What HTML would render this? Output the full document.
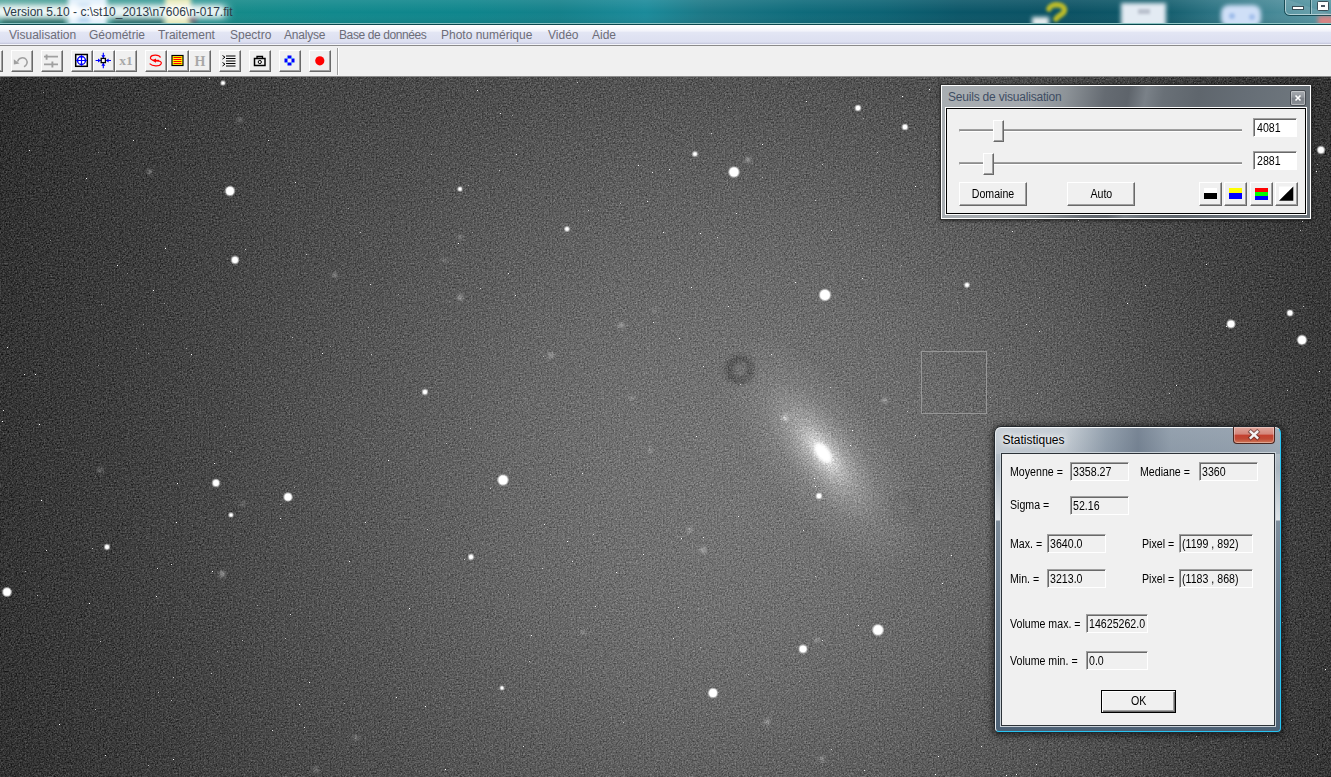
<!DOCTYPE html>
<html lang="fr">
<head>
<meta charset="utf-8">
<title>Iris - Version 5.10</title>
<style>
html,body{margin:0;padding:0;}
body{width:1331px;height:777px;overflow:hidden;position:relative;background:#505050;font-family:"Liberation Sans","DejaVu Sans",sans-serif;}
.abs{position:absolute;}
#sky{position:absolute;left:0;top:76px;width:1331px;height:701px;}
#titlebar{position:absolute;left:0;top:0;width:1331px;height:25px;overflow:hidden;background:#0e858c;}
#titletext{position:absolute;left:3px;top:5px;font-size:12px;color:#2c3a48;white-space:nowrap;letter-spacing:0px;}
#menubar{position:absolute;left:0;top:25px;width:1331px;height:20px;background:linear-gradient(180deg,#ffffff 0px,#fbfbfe 3px,#f1f2fa 6px,#e3e6f4 7.5px,#dfe2f2 12px,#dde0f1 17px,#c9cce0 18.5px,#f4f5fb 19.5px);}
#menubar span{position:absolute;top:3px;font-size:12px;color:#6d6d78;white-space:nowrap;}
#toolbar{position:absolute;left:0;top:45px;width:1331px;height:32px;background:#f0f0f0;border-top:1px solid #8a8a8a;border-bottom:1px solid #8c8c8c;box-sizing:border-box;}
.tb{position:absolute;top:4px;width:22px;height:22px;box-sizing:border-box;background:#f0f0f0;
 border-top:1px solid #fff;border-left:1px solid #fff;border-right:1px solid #696969;border-bottom:1px solid #696969;
 box-shadow:inset -1px -1px 0 #a0a0a0;}
.tb svg{position:absolute;left:0;top:0;width:20px;height:20px;}

#seuils{position:absolute;left:940px;top:84px;width:372px;height:136px;box-sizing:border-box;border:1px solid #2e2e2e;box-shadow:0 1px 3px rgba(0,0,0,.55);}
#seuils .sglass{position:absolute;left:0;top:0;right:0;bottom:0;border:1px solid #fff;
 background:linear-gradient(100deg,#a9aeb2 0%,#a4a9ae 22%,#8d9398 32%,#656b72 42%,#5e646b 48%,#7a8188 52.5%,#697077 57%,#5f666d 66%,#666e76 78%,#6d757c 90%,#666d74 100%);}
#seuils .stitle{position:absolute;left:7px;top:5px;letter-spacing:-0.2px;font-size:12px;color:#3f4d63;white-space:nowrap;}
#seuils .sclose{position:absolute;left:349px;top:5px;width:16px;height:16px;box-sizing:border-box;border:1px solid #454a50;border-radius:2px;
 background:linear-gradient(180deg,#a7abb0 0%,#8e9399 45%,#7b8087 50%,#8b9096 100%);box-shadow:inset 0 0 0 1px rgba(255,255,255,.35);}
#seuils .sclose svg{position:absolute;left:0;top:0;}
#seuils .sclient{position:absolute;left:5px;top:23px;width:358px;height:104px;background:#f0f0f0;border:1px solid #000;outline:1px solid #fff;
 font-size:11px;color:#000;}
.trk{position:absolute;left:12px;width:283px;height:3px;box-sizing:border-box;border-top:1px solid #a0a0a0;border-left:1px solid #a0a0a0;background:#8c8c8c;border-bottom:1px solid #fff;}
.thumb{position:absolute;width:11px;height:22px;box-sizing:border-box;background:#f0f0f0;border-top:1px solid #fff;border-left:1px solid #fff;border-right:1px solid #696969;border-bottom:1px solid #696969;box-shadow:inset -1px -1px 0 #a0a0a0;}
.edit{position:absolute;width:44px;height:19px;box-sizing:border-box;background:#fff;border-top:1px solid #a0a0a0;border-left:1px solid #a0a0a0;border-right:1px solid #fff;border-bottom:1px solid #fff;box-shadow:inset 1px 1px 0 #696969;font-size:12px;line-height:14px;}
.edit i{position:absolute;left:3px;top:2px;}
.btn{position:absolute;height:24px;box-sizing:border-box;background:#f0f0f0;border-top:1px solid #fff;border-left:1px solid #fff;border-right:1px solid #696969;border-bottom:1px solid #696969;box-shadow:inset -1px -1px 0 #a0a0a0;text-align:center;font-size:12px;line-height:23px;color:#000;}

.btn svg{position:absolute;left:0;top:0;}

#stats{position:absolute;left:994px;top:426px;width:288px;height:307px;box-sizing:border-box;border:1px solid #23282d;border-radius:7px 7px 5px 5px;
 box-shadow:0 1px 6px 2px rgba(0,0,0,.55);}
#stats .wglass{position:absolute;left:0;top:0;right:0;bottom:0;box-sizing:border-box;border-radius:6px 6px 4px 4px;
 border-top:1px solid #f4f7f9;border-left:1px solid #e8ecef;border-right:1px solid #28c4f2;border-bottom:1px solid #28c4f2;
 background:linear-gradient(90deg,rgba(255,255,255,.12) 0px,rgba(255,255,255,.1) 70px,rgba(70,90,112,.36) 110px,rgba(55,72,94,.52) 142px,rgba(70,90,112,.36) 175px,rgba(70,90,112,.33) 240px,rgba(70,90,112,.22) 286px) 0 0/100% 26px no-repeat,
 linear-gradient(180deg,#c1c9d1 0px,#b5bec7 24px,#a9b4be 40px,#dfe3e7 92px,#7f8d9b 93px,#66788a 180px,#4c6074 305px);}
#stats .wtitle{position:absolute;left:7.5px;top:6px;font-size:12px;color:#000;white-space:nowrap;text-shadow:0 0 5px #fff,0 0 8px #fff,0 0 10px rgba(255,255,255,.8);}
#stats .wclose{position:absolute;left:238px;top:0px;width:42px;height:17px;box-sizing:border-box;border:1px solid #4a2620;border-top:none;border-radius:0 0 4px 4px;
 background:linear-gradient(180deg,#e0a79d 0%,#d4857a 45%,#c4402f 50%,#c04a35 75%,#d17a5a 100%);box-shadow:inset 0 0 0 1px rgba(255,255,255,.35);}
#stats .wclose svg{position:absolute;left:-1px;top:-1px;}
#stats .wclient{position:absolute;left:6px;top:26px;width:272px;height:271px;background:#f0f0f0;border:1px solid #2c3238;outline:1px solid #c9d1d8;font-size:11px;color:#000;}
.lb{position:absolute;white-space:nowrap;font-size:12px;line-height:14px;transform:scaleX(.885);transform-origin:0 0;}
.ro{position:absolute;height:19px;box-sizing:border-box;background:#f0f0f0;border-top:1px solid #a0a0a0;border-left:1px solid #a0a0a0;border-right:1px solid #fff;border-bottom:1px solid #fff;box-shadow:inset 1px 1px 0 #696969;font-size:12px;line-height:14px;white-space:nowrap;overflow:hidden;}
.ro i,.edit i,.btn i,.okb i{font-style:normal;display:inline-block;transform:scaleX(.885);transform-origin:0 0;}
.ro i{position:absolute;left:2px;top:2px;}
.btn i,.okb i{transform-origin:50% 0;}
.okb{position:absolute;width:75px;height:23px;box-sizing:border-box;border:1px solid #000;background:#f0f0f0;text-align:center;font-size:12px;line-height:20px;box-shadow:inset 1px 1px 0 #fff,inset -1px -1px 0 #696969,inset -2px -2px 0 #a0a0a0;}
</style>
</head>
<body>
<svg id="sky" width="1331" height="701" viewBox="0 76 1331 701">
<defs>
<radialGradient id="vg" gradientUnits="userSpaceOnUse" cx="760" cy="480" r="900"><stop offset="0.0000" stop-color="#747474"/><stop offset="0.0556" stop-color="#737373"/><stop offset="0.1111" stop-color="#717171"/><stop offset="0.1667" stop-color="#6e6e6e"/><stop offset="0.2222" stop-color="#6a6a6a"/><stop offset="0.2778" stop-color="#656565"/><stop offset="0.3333" stop-color="#5f5f5f"/><stop offset="0.3889" stop-color="#595959"/><stop offset="0.4444" stop-color="#535353"/><stop offset="0.5000" stop-color="#4d4d4d"/><stop offset="0.5556" stop-color="#484848"/><stop offset="0.6111" stop-color="#434343"/><stop offset="0.6667" stop-color="#3f3f3f"/><stop offset="0.7222" stop-color="#3b3b3b"/><stop offset="0.7778" stop-color="#383838"/><stop offset="0.8333" stop-color="#353535"/><stop offset="0.8889" stop-color="#323232"/><stop offset="0.9444" stop-color="#2d2d2d"/><stop offset="1.0000" stop-color="#2c2c2c"/></radialGradient>
<linearGradient id="lx" gradientUnits="userSpaceOnUse" x1="0" x2="1331" y1="0" y2="0"><stop offset="0" stop-color="#fff" stop-opacity="0"/><stop offset="0.22" stop-color="#fff" stop-opacity="0.03"/><stop offset="0.5" stop-color="#fff" stop-opacity="0.01"/><stop offset="0.8" stop-color="#000" stop-opacity="0"/><stop offset="1" stop-color="#000" stop-opacity="0.11"/></linearGradient>
<radialGradient id="gh"><stop offset="0" stop-color="#fff" stop-opacity="0.6"/><stop offset="0.35" stop-color="#fff" stop-opacity="0.27"/><stop offset="0.7" stop-color="#fff" stop-opacity="0.09"/><stop offset="1" stop-color="#fff" stop-opacity="0"/></radialGradient>
<radialGradient id="gh2"><stop offset="0" stop-color="#fff" stop-opacity="0.2"/><stop offset="0.5" stop-color="#fff" stop-opacity="0.1"/><stop offset="1" stop-color="#fff" stop-opacity="0"/></radialGradient>
<radialGradient id="gc"><stop offset="0" stop-color="#fff" stop-opacity="1"/><stop offset="0.68" stop-color="#fff" stop-opacity="1"/><stop offset="1" stop-color="#fff" stop-opacity="0"/></radialGradient>
<filter id="grain" x="0" y="0" width="100%" height="100%" color-interpolation-filters="sRGB">
<feTurbulence type="fractalNoise" baseFrequency="0.63" numOctaves="3" seed="11" result="t"/>
<feColorMatrix in="t" type="matrix" values="0.6 0.6 -0.2 0 0  0.6 0.6 -0.2 0 0  0.6 0.6 -0.2 0 0  0 0 0 0 1" result="g"/>
<feComposite in="SourceGraphic" in2="g" operator="arithmetic" k1="0" k2="1" k3="0.44" k4="-0.22"/>
</filter>
<filter id="b1" x="-50%" y="-50%" width="200%" height="200%"><feGaussianBlur stdDeviation="0.8"/></filter>
<filter id="b2" x="-50%" y="-50%" width="200%" height="200%"><feGaussianBlur stdDeviation="1.4"/></filter>
<filter id="b4" x="-50%" y="-50%" width="200%" height="200%"><feGaussianBlur stdDeviation="2"/></filter>
<filter id="b3" x="-50%" y="-50%" width="200%" height="200%"><feGaussianBlur stdDeviation="3"/></filter>
</defs>
<g filter="url(#grain)">
<rect x="0" y="76" width="1331" height="701" fill="url(#vg)"/><rect x="0" y="76" width="1331" height="701" fill="url(#lx)"/>
<g filter="url(#b4)" fill="none"><circle cx="740" cy="369.5" r="11" stroke="#000" stroke-opacity="0.25" stroke-width="8"/></g><g filter="url(#b3)" fill="none">
<circle cx="905" cy="507" r="12" stroke="#000" stroke-opacity="0.08" stroke-width="7"/></g>
<g transform="translate(823,453) rotate(52)">
<ellipse cx="0" cy="0" rx="145" ry="60" fill="url(#gh2)"/>
<ellipse cx="0" cy="0" rx="86" ry="34" fill="url(#gh)"/>
<ellipse cx="0" cy="0" rx="42" ry="17" fill="url(#gh)"/>
</g>
<g filter="url(#b2)" fill="#fff"><circle cx="150" cy="172" r="3" fill-opacity="0.25"/><circle cx="240" cy="120" r="3" fill-opacity="0.2"/><circle cx="222" cy="575" r="3" fill-opacity="0.25"/><circle cx="703" cy="550" r="3.5" fill-opacity="0.3"/><circle cx="622" cy="325" r="3" fill-opacity="0.22"/><circle cx="550" cy="355" r="3" fill-opacity="0.2"/><circle cx="460" cy="297" r="2.5" fill-opacity="0.3"/><circle cx="632" cy="398" r="2.5" fill-opacity="0.25"/><circle cx="885" cy="400" r="3" fill-opacity="0.3"/><circle cx="785" cy="418" r="3" fill-opacity="0.55"/><circle cx="817" cy="640" r="2.5" fill-opacity="0.3"/><circle cx="335" cy="275" r="2.5" fill-opacity="0.3"/><circle cx="460" cy="237" r="2.5" fill-opacity="0.25"/><circle cx="445" cy="260" r="2.5" fill-opacity="0.2"/><circle cx="460" cy="298" r="2.5" fill-opacity="0.25"/><circle cx="655" cy="310" r="2.5" fill-opacity="0.2"/><circle cx="620" cy="325" r="2.5" fill-opacity="0.2"/><circle cx="552" cy="356" r="2.5" fill-opacity="0.2"/><circle cx="100" cy="470" r="3" fill-opacity="0.2"/><circle cx="242" cy="504" r="2.5" fill-opacity="0.2"/><circle cx="222" cy="573" r="2.5" fill-opacity="0.3"/><circle cx="650" cy="450" r="2.5" fill-opacity="0.3"/><circle cx="690" cy="530" r="3" fill-opacity="0.25"/><circle cx="748" cy="160" r="3" fill-opacity="0.3"/><circle cx="1198" cy="612" r="3" fill-opacity="0.15"/><circle cx="822" cy="759" r="3" fill-opacity="0.25"/><circle cx="767" cy="722" r="3" fill-opacity="0.3"/><circle cx="356" cy="738" r="3" fill-opacity="0.2"/><circle cx="316" cy="770" r="3" fill-opacity="0.2"/><circle cx="583" cy="632" r="2.5" fill-opacity="0.25"/></g>
</g>
<g transform="translate(823,453) rotate(52)" filter="url(#b1)"><ellipse cx="0" cy="0" rx="14" ry="7.5" fill="url(#gc)"/></g>
<g fill="#fff"><circle cx="230" cy="191" r="5.5" fill-opacity="0.28"/><circle cx="230" cy="191" r="4.7" fill-opacity="0.5"/><circle cx="230" cy="191" r="3.9"/><circle cx="235" cy="260" r="4.5" fill-opacity="0.28"/><circle cx="235" cy="260" r="3.7" fill-opacity="0.5"/><circle cx="235" cy="260" r="2.9"/><circle cx="734" cy="172" r="6.1" fill-opacity="0.28"/><circle cx="734" cy="172" r="5.3" fill-opacity="0.5"/><circle cx="734" cy="172" r="4.5"/><circle cx="825" cy="295" r="6.5" fill-opacity="0.28"/><circle cx="825" cy="295" r="5.7" fill-opacity="0.5"/><circle cx="825" cy="295" r="4.9"/><circle cx="503" cy="480" r="6.1" fill-opacity="0.28"/><circle cx="503" cy="480" r="5.3" fill-opacity="0.5"/><circle cx="503" cy="480" r="4.5"/><circle cx="288" cy="497" r="5.1" fill-opacity="0.28"/><circle cx="288" cy="497" r="4.3" fill-opacity="0.5"/><circle cx="288" cy="497" r="3.5"/><circle cx="216" cy="483" r="4.5" fill-opacity="0.28"/><circle cx="216" cy="483" r="3.7" fill-opacity="0.5"/><circle cx="216" cy="483" r="2.9"/><circle cx="7" cy="592" r="5.3" fill-opacity="0.28"/><circle cx="7" cy="592" r="4.5" fill-opacity="0.5"/><circle cx="7" cy="592" r="3.7"/><circle cx="878" cy="630" r="6.3" fill-opacity="0.28"/><circle cx="878" cy="630" r="5.5" fill-opacity="0.5"/><circle cx="878" cy="630" r="4.7"/><circle cx="803" cy="649" r="4.9" fill-opacity="0.28"/><circle cx="803" cy="649" r="4.1" fill-opacity="0.5"/><circle cx="803" cy="649" r="3.3"/><circle cx="713" cy="693" r="5.5" fill-opacity="0.28"/><circle cx="713" cy="693" r="4.7" fill-opacity="0.5"/><circle cx="713" cy="693" r="3.9"/><circle cx="1231" cy="324" r="4.9" fill-opacity="0.28"/><circle cx="1231" cy="324" r="4.1" fill-opacity="0.5"/><circle cx="1231" cy="324" r="3.3"/><circle cx="1302" cy="340" r="5.5" fill-opacity="0.28"/><circle cx="1302" cy="340" r="4.7" fill-opacity="0.5"/><circle cx="1302" cy="340" r="3.9"/><circle cx="1290" cy="313" r="3.8" fill-opacity="0.25"/><circle cx="1290" cy="313" r="3.1" fill-opacity="0.5"/><circle cx="1290" cy="313" r="2.4"/><circle cx="1321" cy="150" r="4.5" fill-opacity="0.28"/><circle cx="1321" cy="150" r="3.7" fill-opacity="0.5"/><circle cx="1321" cy="150" r="2.9"/><circle cx="858" cy="108" r="3.6" fill-opacity="0.25"/><circle cx="858" cy="108" r="2.9" fill-opacity="0.5"/><circle cx="858" cy="108" r="2.2"/><circle cx="905" cy="127" r="3.6" fill-opacity="0.25"/><circle cx="905" cy="127" r="2.9" fill-opacity="0.5"/><circle cx="905" cy="127" r="2.2"/><circle cx="695" cy="154" r="3.2" fill-opacity="0.25"/><circle cx="695" cy="154" r="2.5" fill-opacity="0.5"/><circle cx="695" cy="154" r="1.8"/><circle cx="460" cy="189" r="3.0" fill-opacity="0.25"/><circle cx="460" cy="189" r="2.3" fill-opacity="0.5"/><circle cx="460" cy="189" r="1.6"/><circle cx="567" cy="229" r="3.2" fill-opacity="0.25"/><circle cx="567" cy="229" r="2.5" fill-opacity="0.5"/><circle cx="567" cy="229" r="1.8"/><circle cx="425" cy="392" r="3.4" fill-opacity="0.25"/><circle cx="425" cy="392" r="2.7" fill-opacity="0.5"/><circle cx="425" cy="392" r="2.0"/><circle cx="231" cy="515" r="3.0" fill-opacity="0.25"/><circle cx="231" cy="515" r="2.3" fill-opacity="0.5"/><circle cx="231" cy="515" r="1.6"/><circle cx="107" cy="547" r="3.4" fill-opacity="0.25"/><circle cx="107" cy="547" r="2.7" fill-opacity="0.5"/><circle cx="107" cy="547" r="2.0"/><circle cx="471" cy="557" r="3.4" fill-opacity="0.25"/><circle cx="471" cy="557" r="2.7" fill-opacity="0.5"/><circle cx="471" cy="557" r="2.0"/><circle cx="819" cy="496" r="3.6" fill-opacity="0.25"/><circle cx="819" cy="496" r="2.9" fill-opacity="0.5"/><circle cx="819" cy="496" r="2.2"/><circle cx="967" cy="285" r="3.2" fill-opacity="0.25"/><circle cx="967" cy="285" r="2.5" fill-opacity="0.5"/><circle cx="967" cy="285" r="1.8"/><circle cx="502" cy="688" r="2.8" fill-opacity="0.25"/><circle cx="502" cy="688" r="2.1" fill-opacity="0.5"/><circle cx="502" cy="688" r="1.4"/><circle cx="223" cy="83" r="3.0" fill-opacity="0.25"/><circle cx="223" cy="83" r="2.3" fill-opacity="0.5"/><circle cx="223" cy="83" r="1.6"/></g>
<g fill="#fff"><rect x="663" y="232" width="1" height="1" fill-opacity="1"/><rect x="98" y="152" width="1" height="1" fill-opacity="0.5"/><rect x="748" y="674" width="1" height="1" fill-opacity="0.5"/><rect x="1039" y="297" width="1" height="1" fill-opacity="0.5"/><rect x="176" y="522" width="1" height="1" fill-opacity="1"/><rect x="143" y="324" width="1" height="1" fill-opacity="0.5"/><rect x="1128" y="512" width="1" height="1" fill-opacity="0.5"/><rect x="1158" y="204" width="1" height="1" fill-opacity="0.7"/><rect x="1291" y="720" width="1" height="1" fill-opacity="0.5"/><rect x="1181" y="677" width="1" height="1" fill-opacity="1"/><rect x="101" y="304" width="1" height="1" fill-opacity="0.5"/><rect x="1140" y="214" width="1" height="1" fill-opacity="0.9"/><rect x="858" y="225" width="1" height="1" fill-opacity="0.5"/><rect x="1169" y="393" width="1" height="1" fill-opacity="0.7"/><rect x="211" y="673" width="1" height="1" fill-opacity="0.7"/><rect x="762" y="177" width="1" height="1" fill-opacity="0.5"/><rect x="1155" y="139" width="1" height="1" fill-opacity="0.7"/><rect x="1016" y="774" width="1" height="1" fill-opacity="1"/><rect x="643" y="554" width="1" height="1" fill-opacity="1"/><rect x="740" y="384" width="1" height="1" fill-opacity="0.7"/><rect x="368" y="327" width="1" height="1" fill-opacity="0.5"/><rect x="1176" y="385" width="1" height="1" fill-opacity="1"/><rect x="703" y="537" width="1" height="1" fill-opacity="0.9"/><rect x="1247" y="152" width="1" height="1" fill-opacity="0.5"/><rect x="1048" y="506" width="1" height="1" fill-opacity="0.7"/><rect x="700" y="233" width="1" height="1" fill-opacity="1"/><rect x="863" y="118" width="1" height="1" fill-opacity="0.5"/><rect x="1142" y="664" width="1" height="1" fill-opacity="0.9"/><rect x="696" y="436" width="1" height="1" fill-opacity="1"/><rect x="1187" y="545" width="1" height="1" fill-opacity="0.5"/><rect x="191" y="354" width="1" height="1" fill-opacity="1"/><rect x="133" y="140" width="1" height="1" fill-opacity="0.9"/><rect x="1325" y="669" width="1" height="1" fill-opacity="1"/><rect x="582" y="473" width="1" height="1" fill-opacity="0.9"/><rect x="46" y="550" width="1" height="1" fill-opacity="0.9"/><rect x="344" y="703" width="1" height="1" fill-opacity="0.5"/><rect x="1011" y="138" width="1" height="1" fill-opacity="0.7"/><rect x="588" y="210" width="1" height="1" fill-opacity="0.7"/><rect x="814" y="478" width="1" height="1" fill-opacity="1"/><rect x="165" y="248" width="1" height="1" fill-opacity="1"/><rect x="822" y="640" width="1" height="1" fill-opacity="0.9"/><rect x="280" y="518" width="1" height="1" fill-opacity="0.9"/><rect x="850" y="445" width="1" height="1" fill-opacity="1"/><rect x="472" y="232" width="1" height="1" fill-opacity="0.5"/><rect x="360" y="232" width="1" height="1" fill-opacity="0.7"/><rect x="477" y="90" width="1" height="1" fill-opacity="1"/><rect x="1206" y="264" width="1" height="1" fill-opacity="0.9"/><rect x="577" y="82" width="1" height="1" fill-opacity="0.7"/><rect x="858" y="625" width="1" height="1" fill-opacity="0.9"/><rect x="1248" y="657" width="1" height="1" fill-opacity="0.9"/><rect x="257" y="605" width="1" height="1" fill-opacity="0.5"/><rect x="935" y="774" width="1" height="1" fill-opacity="1"/><rect x="815" y="486" width="1" height="1" fill-opacity="1"/><rect x="212" y="571" width="1" height="1" fill-opacity="1"/><rect x="127" y="273" width="1" height="1" fill-opacity="0.5"/><rect x="427" y="529" width="1" height="1" fill-opacity="0.7"/><rect x="225" y="426" width="1" height="1" fill-opacity="0.5"/><rect x="209" y="78" width="1" height="1" fill-opacity="0.7"/><rect x="1098" y="181" width="1" height="1" fill-opacity="0.9"/><rect x="1256" y="104" width="1" height="1" fill-opacity="0.5"/><rect x="425" y="706" width="1" height="1" fill-opacity="1"/><rect x="304" y="727" width="1" height="1" fill-opacity="0.9"/><rect x="711" y="694" width="1" height="1" fill-opacity="0.9"/><rect x="971" y="203" width="1" height="1" fill-opacity="0.5"/><rect x="999" y="555" width="1" height="1" fill-opacity="1"/><rect x="990" y="397" width="1" height="1" fill-opacity="0.5"/><rect x="295" y="182" width="1" height="1" fill-opacity="0.9"/><rect x="542" y="568" width="1" height="1" fill-opacity="0.7"/><rect x="1057" y="101" width="1" height="1" fill-opacity="0.7"/><rect x="1081" y="448" width="1" height="1" fill-opacity="0.7"/><rect x="1112" y="105" width="1" height="1" fill-opacity="0.9"/><rect x="1316" y="171" width="1" height="1" fill-opacity="0.9"/><rect x="1061" y="453" width="1" height="1" fill-opacity="0.7"/><rect x="728" y="306" width="1" height="1" fill-opacity="0.9"/><rect x="1303" y="306" width="1" height="1" fill-opacity="0.7"/><rect x="490" y="488" width="1" height="1" fill-opacity="0.7"/><rect x="409" y="608" width="1" height="1" fill-opacity="1"/><rect x="728" y="107" width="1" height="1" fill-opacity="0.5"/><rect x="572" y="561" width="1" height="1" fill-opacity="0.9"/><rect x="396" y="697" width="1" height="1" fill-opacity="0.9"/><rect x="915" y="435" width="1" height="1" fill-opacity="0.9"/><rect x="164" y="303" width="1" height="1" fill-opacity="0.5"/><rect x="464" y="559" width="1" height="1" fill-opacity="0.7"/><rect x="691" y="287" width="1" height="1" fill-opacity="1"/><rect x="1278" y="702" width="1" height="1" fill-opacity="0.5"/><rect x="981" y="746" width="1" height="1" fill-opacity="0.9"/><rect x="1317" y="164" width="1" height="1" fill-opacity="0.5"/><rect x="795" y="282" width="1" height="1" fill-opacity="1"/><rect x="365" y="522" width="1" height="1" fill-opacity="0.9"/><rect x="177" y="483" width="1" height="1" fill-opacity="1"/><rect x="822" y="164" width="1" height="1" fill-opacity="0.7"/><rect x="348" y="208" width="1" height="1" fill-opacity="0.5"/><rect x="309" y="682" width="1" height="1" fill-opacity="1"/><rect x="299" y="704" width="1" height="1" fill-opacity="1"/><rect x="717" y="237" width="1" height="1" fill-opacity="0.7"/><rect x="43" y="92" width="1" height="1" fill-opacity="0.5"/><rect x="1078" y="220" width="1" height="1" fill-opacity="1"/><rect x="398" y="294" width="1" height="1" fill-opacity="0.5"/><rect x="515" y="295" width="1" height="1" fill-opacity="0.9"/><rect x="1026" y="324" width="1" height="1" fill-opacity="0.9"/><rect x="531" y="635" width="1" height="1" fill-opacity="1"/><rect x="268" y="140" width="1" height="1" fill-opacity="0.9"/><rect x="938" y="756" width="1" height="1" fill-opacity="1"/><rect x="1027" y="211" width="1" height="1" fill-opacity="0.7"/><rect x="1072" y="600" width="1" height="1" fill-opacity="0.5"/><rect x="901" y="265" width="1" height="1" fill-opacity="0.5"/><rect x="306" y="254" width="1" height="1" fill-opacity="0.7"/><rect x="969" y="711" width="1" height="1" fill-opacity="0.5"/><rect x="1139" y="141" width="1" height="1" fill-opacity="0.9"/><rect x="1061" y="621" width="1" height="1" fill-opacity="1"/><rect x="217" y="651" width="1" height="1" fill-opacity="0.5"/><rect x="508" y="273" width="1" height="1" fill-opacity="0.9"/><rect x="86" y="178" width="1" height="1" fill-opacity="1"/><rect x="1150" y="106" width="1" height="1" fill-opacity="0.5"/><rect x="907" y="411" width="1" height="1" fill-opacity="0.7"/><rect x="567" y="541" width="1" height="1" fill-opacity="1"/><rect x="1039" y="331" width="1" height="1" fill-opacity="0.9"/><rect x="1145" y="285" width="1" height="1" fill-opacity="1"/><rect x="280" y="504" width="1" height="1" fill-opacity="0.5"/><rect x="803" y="530" width="1" height="1" fill-opacity="0.9"/><rect x="148" y="765" width="1" height="1" fill-opacity="0.7"/><rect x="877" y="152" width="1" height="1" fill-opacity="0.7"/><rect x="620" y="203" width="1" height="1" fill-opacity="0.7"/><rect x="1317" y="754" width="1" height="1" fill-opacity="0.9"/><rect x="292" y="337" width="1" height="1" fill-opacity="0.7"/><rect x="957" y="302" width="1" height="1" fill-opacity="0.5"/><rect x="815" y="576" width="1" height="1" fill-opacity="0.7"/><rect x="458" y="243" width="1" height="1" fill-opacity="1"/><rect x="1055" y="491" width="1" height="1" fill-opacity="0.9"/><rect x="862" y="278" width="1" height="1" fill-opacity="0.9"/><rect x="652" y="172" width="1" height="1" fill-opacity="0.9"/><rect x="39" y="424" width="1" height="1" fill-opacity="1"/><rect x="902" y="96" width="1" height="1" fill-opacity="1"/><rect x="678" y="607" width="1" height="1" fill-opacity="0.9"/><rect x="1049" y="143" width="1" height="1" fill-opacity="0.5"/><rect x="468" y="185" width="1" height="1" fill-opacity="0.5"/><rect x="543" y="356" width="1" height="1" fill-opacity="0.5"/><rect x="371" y="354" width="1" height="1" fill-opacity="0.7"/><rect x="864" y="770" width="1" height="1" fill-opacity="0.9"/><rect x="831" y="230" width="1" height="1" fill-opacity="1"/><rect x="669" y="169" width="1" height="1" fill-opacity="0.9"/><rect x="117" y="265" width="1" height="1" fill-opacity="1"/><rect x="148" y="353" width="1" height="1" fill-opacity="0.5"/><rect x="1299" y="168" width="1" height="1" fill-opacity="0.9"/><rect x="171" y="700" width="1" height="1" fill-opacity="0.7"/><rect x="136" y="348" width="1" height="1" fill-opacity="0.5"/><rect x="929" y="89" width="1" height="1" fill-opacity="0.9"/><rect x="1132" y="505" width="1" height="1" fill-opacity="0.9"/><rect x="1273" y="210" width="1" height="1" fill-opacity="0.5"/><rect x="1079" y="322" width="1" height="1" fill-opacity="0.5"/><rect x="330" y="346" width="1" height="1" fill-opacity="0.5"/><rect x="370" y="284" width="1" height="1" fill-opacity="0.9"/><rect x="1287" y="390" width="1" height="1" fill-opacity="0.7"/><rect x="593" y="534" width="1" height="1" fill-opacity="0.7"/><rect x="554" y="433" width="1" height="1" fill-opacity="0.5"/><rect x="512" y="115" width="1" height="1" fill-opacity="0.5"/><rect x="37" y="595" width="1" height="1" fill-opacity="0.7"/><rect x="1053" y="564" width="1" height="1" fill-opacity="0.7"/><rect x="915" y="186" width="1" height="1" fill-opacity="1"/><rect x="1013" y="637" width="1" height="1" fill-opacity="1"/><rect x="1037" y="393" width="1" height="1" fill-opacity="0.7"/><rect x="470" y="428" width="1" height="1" fill-opacity="0.7"/><rect x="1302" y="221" width="1" height="1" fill-opacity="1"/><rect x="711" y="133" width="1" height="1" fill-opacity="0.7"/><rect x="29" y="150" width="1" height="1" fill-opacity="0.9"/><rect x="882" y="245" width="1" height="1" fill-opacity="0.5"/><rect x="173" y="759" width="1" height="1" fill-opacity="1"/><rect x="1036" y="764" width="1" height="1" fill-opacity="0.9"/><rect x="1226" y="326" width="1" height="1" fill-opacity="0.9"/><rect x="92" y="548" width="1" height="1" fill-opacity="0.7"/><rect x="322" y="353" width="1" height="1" fill-opacity="1"/><rect x="7" y="347" width="1" height="1" fill-opacity="0.9"/><rect x="673" y="638" width="1" height="1" fill-opacity="0.9"/><rect x="500" y="113" width="1" height="1" fill-opacity="0.9"/><rect x="446" y="443" width="1" height="1" fill-opacity="0.7"/><rect x="2" y="421" width="1" height="1" fill-opacity="1"/><rect x="171" y="564" width="1" height="1" fill-opacity="0.9"/><rect x="1029" y="749" width="1" height="1" fill-opacity="0.7"/><rect x="508" y="594" width="1" height="1" fill-opacity="0.5"/><rect x="186" y="348" width="1" height="1" fill-opacity="0.5"/><rect x="294" y="487" width="1" height="1" fill-opacity="0.5"/><rect x="806" y="101" width="1" height="1" fill-opacity="0.9"/><rect x="623" y="722" width="1" height="1" fill-opacity="0.7"/><rect x="173" y="677" width="1" height="1" fill-opacity="0.7"/><rect x="1221" y="476" width="1" height="1" fill-opacity="0.9"/><rect x="1012" y="231" width="1" height="1" fill-opacity="0.9"/><rect x="1267" y="736" width="1" height="1" fill-opacity="0.7"/><rect x="89" y="603" width="1" height="1" fill-opacity="1"/><rect x="1035" y="220" width="1" height="1" fill-opacity="0.5"/><rect x="1196" y="736" width="1" height="1" fill-opacity="0.7"/><rect x="174" y="109" width="1" height="1" fill-opacity="0.5"/><rect x="272" y="730" width="1" height="1" fill-opacity="0.9"/><rect x="214" y="463" width="1" height="1" fill-opacity="1"/><rect x="1143" y="129" width="1" height="1" fill-opacity="0.5"/><rect x="1282" y="622" width="1" height="1" fill-opacity="0.7"/><rect x="1002" y="348" width="1" height="1" fill-opacity="0.5"/><rect x="935" y="149" width="1" height="1" fill-opacity="0.5"/><rect x="1077" y="145" width="1" height="1" fill-opacity="1"/><rect x="516" y="154" width="1" height="1" fill-opacity="0.9"/><rect x="480" y="288" width="1" height="1" fill-opacity="0.7"/><rect x="942" y="583" width="1" height="1" fill-opacity="1"/><rect x="157" y="568" width="1" height="1" fill-opacity="0.9"/><rect x="95" y="709" width="1" height="1" fill-opacity="0.7"/><rect x="158" y="692" width="1" height="1" fill-opacity="0.7"/><rect x="679" y="338" width="1" height="1" fill-opacity="0.9"/><rect x="1272" y="659" width="1" height="1" fill-opacity="0.7"/><rect x="25" y="571" width="1" height="1" fill-opacity="0.5"/><rect x="994" y="353" width="1" height="1" fill-opacity="0.5"/><rect x="445" y="769" width="1" height="1" fill-opacity="1"/><rect x="595" y="606" width="1" height="1" fill-opacity="0.9"/><rect x="951" y="555" width="1" height="1" fill-opacity="1"/><rect x="242" y="640" width="1" height="1" fill-opacity="0.7"/><rect x="638" y="165" width="1" height="1" fill-opacity="1"/><rect x="35" y="374" width="1" height="1" fill-opacity="1"/><rect x="156" y="596" width="1" height="1" fill-opacity="1"/><rect x="550" y="474" width="1" height="1" fill-opacity="0.7"/><rect x="431" y="154" width="1" height="1" fill-opacity="0.5"/><rect x="290" y="614" width="1" height="1" fill-opacity="0.9"/><rect x="736" y="213" width="1" height="1" fill-opacity="0.9"/><rect x="230" y="451" width="1" height="1" fill-opacity="0.7"/><rect x="1019" y="575" width="1" height="1" fill-opacity="1"/><rect x="50" y="240" width="1" height="1" fill-opacity="0.5"/><rect x="1006" y="775" width="1" height="1" fill-opacity="1"/><rect x="830" y="387" width="1" height="1" fill-opacity="0.7"/><rect x="852" y="430" width="1" height="1" fill-opacity="1"/><rect x="647" y="201" width="1" height="1" fill-opacity="0.9"/><rect x="3" y="410" width="1" height="1" fill-opacity="0.9"/><rect x="815" y="200" width="1" height="1" fill-opacity="0.7"/><rect x="24" y="374" width="1" height="1" fill-opacity="0.9"/><rect x="762" y="144" width="1" height="1" fill-opacity="1"/><rect x="799" y="681" width="1" height="1" fill-opacity="0.5"/><rect x="738" y="516" width="1" height="1" fill-opacity="0.9"/><rect x="98" y="365" width="1" height="1" fill-opacity="0.5"/><rect x="105" y="755" width="1" height="1" fill-opacity="0.9"/><rect x="1300" y="230" width="1" height="1" fill-opacity="0.7"/><rect x="544" y="524" width="1" height="1" fill-opacity="0.9"/><rect x="388" y="460" width="1" height="1" fill-opacity="1"/><rect x="59" y="724" width="1" height="1" fill-opacity="1"/><rect x="1134" y="640" width="1" height="1" fill-opacity="0.7"/><rect x="165" y="128" width="1" height="1" fill-opacity="1"/><rect x="923" y="707" width="1" height="1" fill-opacity="0.7"/><rect x="1319" y="371" width="1" height="1" fill-opacity="1"/><rect x="100" y="641" width="1" height="1" fill-opacity="0.7"/><rect x="349" y="561" width="1" height="1" fill-opacity="1"/><rect x="703" y="366" width="1" height="1" fill-opacity="0.9"/><rect x="523" y="746" width="1" height="1" fill-opacity="0.9"/><rect x="831" y="749" width="1" height="1" fill-opacity="0.7"/><rect x="616" y="572" width="1" height="1" fill-opacity="1"/><rect x="245" y="249" width="1" height="1" fill-opacity="0.7"/><rect x="153" y="290" width="1" height="1" fill-opacity="1"/><rect x="1127" y="303" width="1" height="1" fill-opacity="1"/><rect x="681" y="538" width="1" height="1" fill-opacity="1"/><rect x="285" y="638" width="1" height="1" fill-opacity="0.7"/><rect x="499" y="170" width="1" height="1" fill-opacity="0.7"/><rect x="700" y="647" width="1" height="1" fill-opacity="0.5"/><rect x="653" y="322" width="1" height="1" fill-opacity="0.9"/><rect x="529" y="661" width="1" height="1" fill-opacity="0.7"/><rect x="41" y="500" width="1" height="1" fill-opacity="1"/><rect x="847" y="614" width="1" height="1" fill-opacity="0.7"/><rect x="771" y="354" width="1" height="1" fill-opacity="0.9"/></g>
<rect x="921.5" y="351.5" width="65" height="62" fill="none" stroke="#9c9c9c" stroke-opacity="0.9" stroke-width="1"/>
</svg>
<div id="titlebar"><svg id="tbsvg" width="1331" height="25" viewBox="0 0 1331 25" style="position:absolute;left:0;top:0">
<defs>
<linearGradient id="tg" x1="0" x2="1331" y1="0" y2="0" gradientUnits="userSpaceOnUse">
<stop offset="0" stop-color="#3f9a90"/><stop offset="0.05" stop-color="#2f9088"/><stop offset="0.16" stop-color="#158a88"/><stop offset="0.25" stop-color="#10888c"/>
<stop offset="0.35" stop-color="#0e858c"/><stop offset="0.42" stop-color="#13808a"/><stop offset="0.485" stop-color="#1a8a9a"/><stop offset="0.53" stop-color="#1b7785"/>
<stop offset="0.6" stop-color="#0e6b7b"/><stop offset="0.66" stop-color="#0c6374"/><stop offset="0.72" stop-color="#0a5668"/><stop offset="0.8" stop-color="#0a5163"/>
<stop offset="0.87" stop-color="#0f5969"/><stop offset="0.91" stop-color="#2a7282"/><stop offset="0.96" stop-color="#488a98"/><stop offset="1" stop-color="#5a98a5"/>
</linearGradient>
<linearGradient id="tv" x1="0" x2="0" y1="0" y2="1"><stop offset="0" stop-color="#fff" stop-opacity="0.10"/><stop offset="0.5" stop-color="#fff" stop-opacity="0"/><stop offset="1" stop-color="#000" stop-opacity="0.10"/></linearGradient>
<filter id="tb2" x="-20%" y="-100%" width="140%" height="300%"><feGaussianBlur stdDeviation="2.2"/></filter>
<filter id="tb4" x="-20%" y="-100%" width="140%" height="300%"><feGaussianBlur stdDeviation="4.5"/></filter>
<filter id="tb1" x="-20%" y="-100%" width="140%" height="300%"><feGaussianBlur stdDeviation="1.5"/></filter>
</defs>
<rect width="1331" height="25" fill="url(#tg)"/>
<rect width="1331" height="25" fill="url(#tv)"/>
<g filter="url(#tb2)">
<rect x="68" y="-4" width="39" height="32" fill="#dfeefa"/>
<rect x="78" y="4" width="12" height="18" fill="#8ec0e8"/>
<rect x="2" y="17" width="62" height="9" fill="#135f58"/>
<rect x="113" y="17" width="50" height="9" fill="#135f5c"/>
<rect x="165" y="-3" width="26" height="30" fill="#e6e8b4"/>
<rect x="188" y="15" width="9" height="8" fill="#4a3f52"/>
<rect x="1121" y="3" width="45" height="24" fill="#e3ebf3"/>
<rect x="1032" y="17" width="17" height="9" fill="#e8eef0"/>
<rect x="1221" y="5" width="40" height="22" rx="8" fill="#cfdff7"/>
<rect x="1318" y="16" width="16" height="10" fill="#d88484"/>
</g>
<g filter="url(#tb1)">
<path d="M1049 9 C1050 3.5 1064 3 1064.500 10 C1064.500 14.500 1058 15 1056 19" fill="none" stroke="#c9c424" stroke-width="5.5" stroke-opacity="0.92" stroke-linecap="round"/>
<rect x="1138" y="9" width="12" height="5" fill="#b8c0cc"/>
<circle cx="1232" cy="16" r="3" fill="#9dbcea"/><circle cx="1252" cy="17" r="3" fill="#a4c0ec"/>
</g>
<g filter="url(#tb4)"><rect x="-8" y="5" width="236" height="13" rx="6" fill="#fff" fill-opacity="0.88"/></g>
<g filter="url(#tb2)"><rect x="-4" y="6" width="228" height="11" rx="5" fill="#fff" fill-opacity="0.55"/></g>
<rect x="0" y="23" width="1331" height="1" fill="#8fc6c6"/>
<rect x="0" y="24" width="1331" height="1" fill="#0b474e"/>
<!-- window buttons -->
<path d="M1285.500 -1 V10 Q1285.500 14.500 1290 14.500 H1332" fill="rgba(255,255,255,0.10)" stroke="#cfe3e6" stroke-opacity="0.75" stroke-width="1"/>
<path d="M1284.500 -1 V10.500 Q1284.500 15.500 1290 15.500 H1332" fill="none" stroke="#0a3a42" stroke-opacity="0.8" stroke-width="1"/>
<path d="M1310.500 0 V14" stroke="#0a3a42" stroke-opacity="0.7"/><path d="M1311.500 0 V14" stroke="#cfe3e6" stroke-opacity="0.55"/>
<rect x="1292.500" y="6.500" width="11" height="3" fill="#fff" stroke="#3a4f58" stroke-width="1"/>
<rect x="1317.500" y="1.500" width="11" height="9" rx="1" fill="#b9a9a9" stroke="#3a4f58" stroke-width="1"/>
<rect x="1319.500" y="3.500" width="7" height="5" fill="none" stroke="#fff" stroke-width="3"/>
<rect x="1321.500" y="5.500" width="3" height="1" fill="#b8a4a4" stroke="#4a5560" stroke-width="1"/>
</svg>
<div id="titletext">Version 5.10 - c:\st10_2013\n7606\n-017.fit</div></div>
<div id="menubar">
<span style="left:9px">Visualisation</span>
<span style="left:89px">Géométrie</span>
<span style="left:158px">Traitement</span>
<span style="left:230px">Spectro</span>
<span style="left:284px;letter-spacing:-0.2px">Analyse</span>
<span style="left:339px;letter-spacing:-0.4px">Base de données</span>
<span style="left:441px">Photo numérique</span>
<span style="left:548px">Vidéo</span>
<span style="left:592px">Aide</span>
</div>
<div id="toolbar">
<div class="tb" style="left:-19px"></div>
<div class="tb" style="left:11px"><svg viewBox="0 0 20 20"><path d="M5.6 10.6 C6.4 6.6 12 5.4 14.3 8.6 C16.2 11.4 14.6 14.6 12 15.8" fill="none" stroke="#a0a0a0" stroke-width="1.5"/><path d="M1.8 8.2 L7.6 12.6 L1.8 13.4 Z" fill="#a0a0a0"/></svg></div>
<div class="tb" style="left:41px"><svg viewBox="0 0 20 20"><path d="M2 5.6 H16 M2 13.4 H16" stroke="#a0a0a0" stroke-width="1.7" fill="none"/><path d="M4.6 3.4 V8.8 M10.4 10.4 V16.6" stroke="#a0a0a0" stroke-width="1.9" fill="none"/></svg></div>
<div class="tb" style="left:71px"><svg viewBox="0 0 20 20"><rect x="3.700" y="3.500" width="11.600" height="11.800" fill="#fff" stroke="#000" stroke-width="1.5"/><circle cx="9.500" cy="9.500" r="4" fill="none" stroke="#00f" stroke-width="1.3"/><path d="M9.500 4.500 V14.500 M4.500 9.500 H14.500" stroke="#00f" stroke-width="1.2"/><path d="M9.500 4 L7.800 6.200 H11.200 Z M9.500 15 L7.800 12.800 H11.200 Z M4 9.500 L6.200 7.800 V11.200 Z M15 9.500 L12.800 7.800 V11.200 Z" fill="#00f"/></svg></div>
<div class="tb" style="left:93px"><svg viewBox="0 0 20 20"><path d="M9.300 1.800 V17.200 M1.600 9.500 H17" stroke="#00f" stroke-width="1.1"/><path d="M9.300 7 L7.300 4.200 H11.300 Z M9.300 12 L7.300 14.800 H11.300 Z M6.800 9.500 L4 7.500 V11.500 Z M11.800 9.500 L14.600 7.500 V11.500 Z" fill="#00f"/><rect x="7.200" y="7.400" width="4.200" height="4.200" fill="#fff" stroke="#000" stroke-width="1.3"/></svg></div>
<div class="tb" style="left:115px"><svg viewBox="0 0 20 20"><text x="10" y="14" text-anchor="middle" font-family="Liberation Serif,DejaVu Serif,serif" font-weight="bold" font-size="13.5" fill="#a8a8a8">x1</text></svg></div>
<div class="tb" style="left:145px"><svg viewBox="0 0 20 20"><path d="M14.5 6.5 C13 3.5 6 3.2 4.5 6.2 C3.6 8.6 7 9.6 10 9.6 C13.5 9.6 16.3 10.8 15 13 C13.5 15.6 6.5 15.6 3.6 12.6" fill="none" stroke="#f00" stroke-width="1.2"/><path d="M6 9.6 L10 7.4 V11.8 Z" fill="#f00"/><path d="M9 9.6 H13" stroke="#f00" stroke-width="1.6"/></svg></div>
<div class="tb" style="left:167px"><svg viewBox="0 0 20 20"><rect x="4" y="4.5" width="11" height="10" fill="#ff0" stroke="#000" stroke-width="1.2"/><path d="M5.5 6.5 H13.5 M5.5 8.5 H13.5 M5.5 10.5 H13.5 M5.5 12.5 H13.5" stroke="#f00" stroke-width="1"/></svg></div>
<div class="tb" style="left:189px"><svg viewBox="0 0 20 20"><text x="10" y="14.5" text-anchor="middle" font-family="Liberation Serif,DejaVu Serif,serif" font-weight="bold" font-size="14" fill="#a8a8a8">H</text></svg></div>
<div class="tb" style="left:219px"><svg viewBox="0 0 20 20"><path d="M6 5 H15.5 M6 7.5 H15.5 M6 10 H15.5 M6 12.5 H15.5 M6 15 H15.5" stroke="#000" stroke-width="1.2"/><path d="M2.5 4.5 L5 6.2 L2.5 8 M2.5 11.5 L5 13.2 L2.5 15" fill="none" stroke="#000" stroke-width="1"/></svg></div>
<div class="tb" style="left:249px"><svg viewBox="0 0 20 20"><path d="M4.5 7.5 H15 V14.5 H4.5 Z" fill="none" stroke="#000" stroke-width="1.5"/><path d="M7 7.5 V5.5 H12.5 V7.5" fill="none" stroke="#000" stroke-width="1.3"/><circle cx="9.8" cy="11" r="1.6" fill="none" stroke="#000" stroke-width="1"/></svg></div>
<div class="tb" style="left:279px"><svg viewBox="0 0 20 20"><path d="M7.5 4.5 h4 v3 h-4z M7.5 11.5 h4 v3 h-4z M4.5 7.5 h3 v4 h-3z M11.5 7.5 h3 v4 h-3z" fill="#00f"/><path d="M6.5 6.5 h1 v1 h-1z M11.5 6.5 h1 v1 h-1z M6.5 11.5 h1 v1 h-1z M11.5 11.5 h1 v1 h-1z" fill="#0ff"/></svg></div>
<div class="tb" style="left:309px"><svg viewBox="0 0 20 20"><circle cx="9.8" cy="9.8" r="4.6" fill="#f00"/></svg></div>
<div style="position:absolute;left:337px;top:2px;width:1px;height:27px;background:#a0a0a0;"></div>
<div style="position:absolute;left:338px;top:2px;width:1px;height:27px;background:#fff;"></div>

</div>
<div id="seuils">
<div class="sglass"></div>
<div class="stitle">Seuils de visualisation</div>
<div class="sclose"><svg viewBox="0 0 14 14" width="14" height="14"><path d="M4.500 4.500 L9.500 9.500 M9.500 4.500 L4.500 9.500" stroke="#fff" stroke-width="1.6"/></svg></div>
<div class="sclient">
 <div class="trk" style="top:20px"></div><div class="thumb" style="left:46px;top:11px"></div>
 <div class="trk" style="top:53px"></div><div class="thumb" style="left:36px;top:44px"></div>
 <div class="edit" style="left:306px;top:9px"><i>4081</i></div>
 <div class="edit" style="left:306px;top:42px"><i>2881</i></div>
 <div class="btn" style="left:12px;top:73px;width:68px"><i>Domaine</i></div>
 <div class="btn" style="left:120px;top:73px;width:68px"><i>Auto</i></div>
 <div class="btn" style="left:252px;top:73px;width:23px"><svg viewBox="0 0 21 22" width="21" height="22"><rect x="4" y="5" width="13" height="5" fill="#fff"/><rect x="4" y="10" width="13" height="6" fill="#000"/></svg></div>
 <div class="btn" style="left:277px;top:73px;width:23px"><svg viewBox="0 0 21 22" width="21" height="22"><rect x="4" y="5" width="13" height="5" fill="#ff0"/><rect x="4" y="10" width="13" height="6" fill="#00f"/></svg></div>
 <div class="btn" style="left:303px;top:73px;width:23px"><svg viewBox="0 0 21 22" width="21" height="22"><rect x="4" y="5" width="13" height="4" fill="#f00"/><rect x="4" y="9" width="13" height="4" fill="#0f0"/><rect x="4" y="13" width="13" height="4" fill="#00f"/></svg></div>
 <div class="btn" style="left:328px;top:73px;width:23px"><svg viewBox="0 0 21 22" width="21" height="22"><path d="M3 3.5 H17.300 V17.800 H3 Z" fill="#fff"/><path d="M17.300 3.500 V17.800 H3 Z" fill="#000"/></svg></div>
</div>
</div>

<div id="stats">
<div class="wglass"></div>
<div class="wtitle">Statistiques</div>
<div class="wclose"><svg viewBox="0 0 42 17" width="42" height="17"><path d="M17.8 5.8 L24.2 11.7 M24.2 5.8 L17.8 11.7" stroke="#4c2a28" stroke-width="4.4" stroke-linecap="square" opacity=".6"/><path d="M17.8 5.8 L24.2 11.7 M24.2 5.8 L17.8 11.7" stroke="#f4f4f4" stroke-width="2.5" stroke-linecap="square"/></svg></div>
<div class="wclient">
 <span class="lb" style="left:8px;top:11px">Moyenne =</span><div class="ro" style="left:68px;top:8px;width:59px"><i>3358.27</i></div>
 <span class="lb" style="left:138px;top:11px">Mediane =</span><div class="ro" style="left:197px;top:8px;width:59px"><i>3360</i></div>
 <span class="lb" style="left:8px;top:44px">Sigma =</span><div class="ro" style="left:68px;top:42px;width:59px"><i>52.16</i></div>
 <span class="lb" style="left:8px;top:83px">Max. =</span><div class="ro" style="left:45px;top:80px;width:59px"><i>3640.0</i></div>
 <span class="lb" style="left:140px;top:83px">Pixel =</span><div class="ro" style="left:177px;top:80px;width:74px"><i>(1199 , 892)</i></div>
 <span class="lb" style="left:8px;top:118px">Min. =</span><div class="ro" style="left:45px;top:115px;width:59px"><i>3213.0</i></div>
 <span class="lb" style="left:140px;top:118px">Pixel =</span><div class="ro" style="left:177px;top:115px;width:74px"><i>(1183 , 868)</i></div>
 <span class="lb" style="left:8px;top:163px">Volume max. =</span><div class="ro" style="left:84px;top:160px;width:62px"><i>14625262.0</i></div>
 <span class="lb" style="left:8px;top:200px">Volume min. =</span><div class="ro" style="left:84px;top:197px;width:62px"><i>0.0</i></div>
 <div class="okb" style="left:99px;top:236px"><i>OK</i></div>
</div>
</div>

</body>
</html>
